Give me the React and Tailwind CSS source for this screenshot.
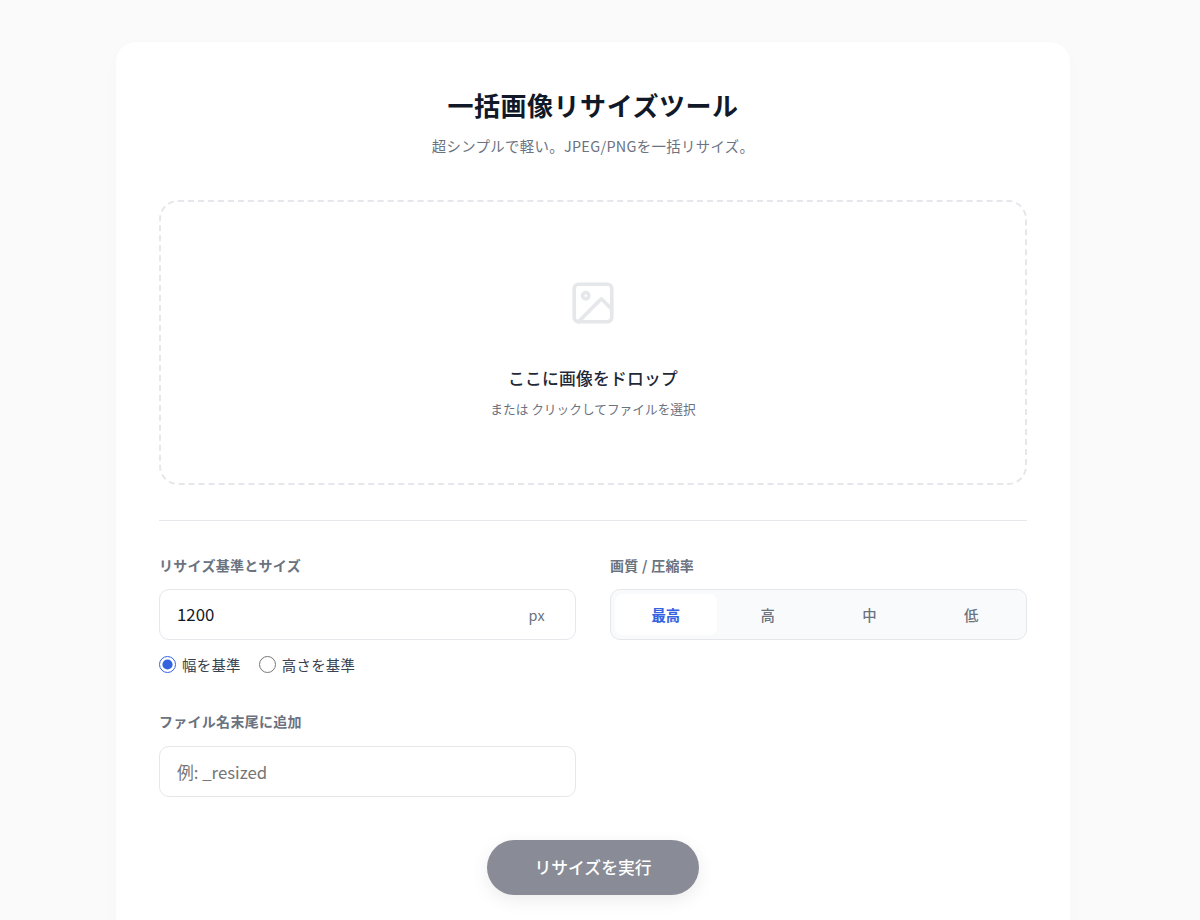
import React, { useState } from 'react';

const font = "font-['Noto_Sans_CJK_JP','Noto_Sans_CJK_SC',sans-serif]";
const qualities = ['最高', '高', '中', '低'];

function ImageIcon() {
  return (
    <svg width="50" height="50" viewBox="0 0 24 24" fill="none" stroke="#e5e7eb" strokeWidth="1.75" strokeLinecap="round" strokeLinejoin="round">
      <rect x="3" y="3" width="18" height="18" rx="2" />
      <circle cx="8.5" cy="8.5" r="1.5" />
      <path d="M21 15l-5-5L5 21" />
    </svg>
  );
}

function FieldLabel({ children }) {
  return <label className="mb-[14px] block text-[14px] leading-[20px] font-bold tracking-[0.28px] text-[#6b7280]">{children}</label>;
}

export default function App() {
  const [basis, setBasis] = useState('width');
  const [quality, setQuality] = useState('最高');

  return (
    <div className={`${font} h-[920px] overflow-hidden bg-[#fafafa] pt-[42px]`}>
      <main className="ml-[116px] w-[954px] rounded-[20px] bg-white px-[43px] pt-[42px] pb-[43px] shadow-[0_5px_24px_rgba(0,0,0,0.015)]">
        <header className="text-center">
          <h1 className="text-[26px] leading-[42px] font-bold tracking-[0.52px] text-[#111827]">一括画像リサイズツール</h1>
          <p className="mt-[8px] text-[14.4px] leading-[23px] tracking-[0.33px] text-[#6b7280]">超シンプルで軽い。JPEG/PNGを一括リサイズ。</p>
        </header>

        <div className="mt-[43px] flex h-[285px] flex-col items-center rounded-[19px] border-2 border-dashed border-[#e5e7eb] pt-[76px]">
          <ImageIcon />
          <p className="mt-[37px] text-[16.8px] leading-[27px] font-medium tracking-[0.2px] text-[#1f2937]">ここに画像をドロップ</p>
          <p className="mt-[7px] text-[12.7px] leading-[19px] text-[#6b7280]">または クリックしてファイルを選択</p>
        </div>

        <hr className="mt-[35px] border-t border-[#e5e7eb]" />

        <div className="mt-[34px] grid grid-cols-2 gap-x-[34px]">
          <div>
            <FieldLabel>リサイズ基準とサイズ</FieldLabel>
            <div className="flex h-[51px] items-center justify-between rounded-[10px] border border-[#e5e7eb] pr-[30px] pl-[17px]">
              <span className="text-[16.8px] text-[#111827]">1200</span>
              <span className="text-[14.4px] tracking-[0.3px] text-[#6b7280]">px</span>
            </div>
            <div className="mt-[13px] flex items-center gap-[18px]">
              <label className="flex items-center gap-[6px] text-[14.4px] leading-[23px] tracking-[0.3px] text-[#374151]">
                <input type="radio" name="basis" checked={basis === 'width'} onChange={() => setBasis('width')} className="m-0 h-[17px] w-[17px] accent-[#3563e0]" />
                幅を基準
              </label>
              <label className="flex items-center gap-[6px] text-[14.4px] leading-[23px] tracking-[0.3px] text-[#374151]">
                <input type="radio" name="basis" checked={basis === 'height'} onChange={() => setBasis('height')} className="m-0 h-[17px] w-[17px] accent-[#3563e0]" />
                高さを基準
              </label>
            </div>
          </div>

          <div>
            <FieldLabel>画質 / 圧縮率</FieldLabel>
            <div className="grid h-[51px] grid-cols-4 rounded-[10px] border border-[#e5e7eb] bg-[#f9fafb] p-[4px]">
              {qualities.map((q) => (
                <button
                  key={q}
                  onClick={() => setQuality(q)}
                  className={q === quality ? 'rounded-[7px] bg-white text-[14.4px] font-bold text-[#3563e0]' : 'rounded-[7px] text-[14.4px] font-medium text-[#6b7280]'}
                >
                  {q}
                </button>
              ))}
            </div>
          </div>
        </div>

        <div className="mt-[35px] w-[417px]">
          <FieldLabel>ファイル名末尾に追加</FieldLabel>
          <input
            placeholder="例: _resized"
            className="mt-[1px] h-[51px] w-full rounded-[10px] border border-[#e5e7eb] px-[17px] text-[16.8px] text-[#111827] outline-none placeholder:text-[#757575]"
          />
        </div>

        <div className="mt-[43px] flex justify-center">
          <button className="h-[55px] w-[212px] rounded-full bg-[#898c96] text-[16.8px] font-medium text-white shadow-[0_5px_18px_rgba(0,0,0,0.08)]">
            リサイズを実行
          </button>
        </div>
      </main>
    </div>
  );
}
